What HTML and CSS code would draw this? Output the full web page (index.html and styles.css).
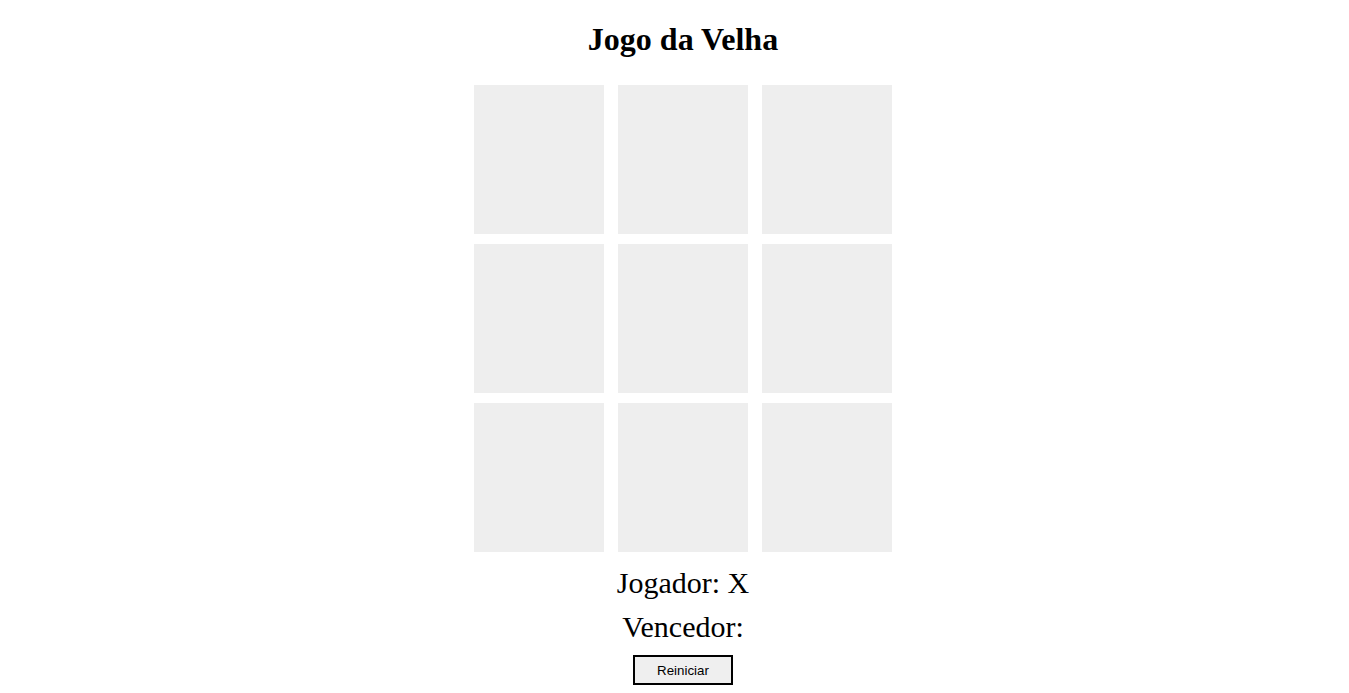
FILE: index.html
```html
<!DOCTYPE html>
<html lang="pt-BR">
<head>
<meta charset="utf-8">
<title>Jogo da Velha</title>
<link rel="stylesheet" href="styles.css">
</head>
<body>
<div class="page">
  <h1 class="title">Jogo da Velha</h1>
  <div class="board">
    <div class="cell"></div><div class="cell"></div><div class="cell"></div>
    <div class="cell"></div><div class="cell"></div><div class="cell"></div>
    <div class="cell"></div><div class="cell"></div><div class="cell"></div>
  </div>
  <div class="status">Jogador: X</div>
  <div class="status">Vencedor: </div>
  <button class="reset" type="button">Reiniciar</button>
</div>
</body>
</html>
```

FILE: styles.css
```css
html, body {
  margin: 0;
  padding: 0;
  background: #fff;
}
body {
  font-family: "Liberation Serif", "Times New Roman", serif;
  color: #000;
}
.page {
  padding: 0 0 0 17px;
  display: flex;
  flex-direction: column;
  align-items: center;
}
.title {
  font-size: 32px;
  font-weight: bold;
  margin: 21px 0 0;
  line-height: 37px;
}
.board {
  margin-top: 27px;
  display: grid;
  grid-template-columns: repeat(3, 130px);
  grid-auto-rows: 149px;
  column-gap: 14px;
  row-gap: 10px;
}
.cell {
  background: #eeeeee;
}
.status {
  font-size: 30px;
  line-height: 44px;
}
.board + .status {
  margin-top: 9px;
}
.reset {
  margin-top: 6px;
  width: 100px;
  height: 30px;
  border: 2px solid #000;
  background: #efefef;
  font-family: "Liberation Sans", Arial, sans-serif;
  font-size: 13.33px;
  color: #000;
  padding: 0;
}
```
